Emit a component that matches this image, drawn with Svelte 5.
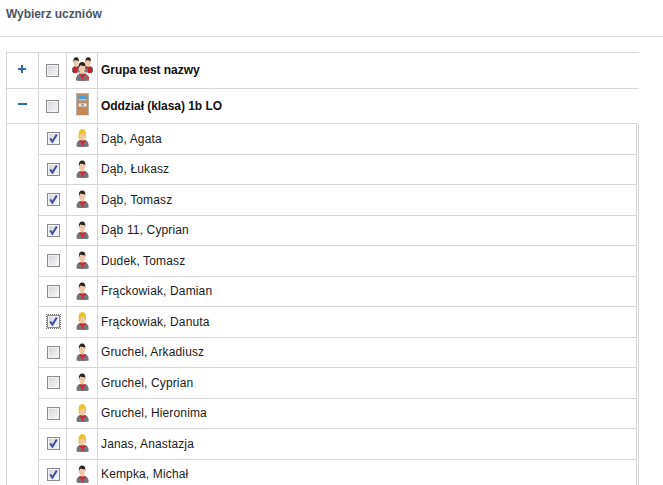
<script>
  const students = [
    { name: 'Dąb, Agata', checked: true, female: true },
    { name: 'Dąb, Łukasz', checked: true },
    { name: 'Dąb, Tomasz', checked: true },
    { name: 'Dąb 11, Cyprian', checked: true },
    { name: 'Dudek, Tomasz' },
    { name: 'Frąckowiak, Damian' },
    { name: 'Frąckowiak, Danuta', checked: true, female: true, focus: true },
    { name: 'Gruchel, Arkadiusz' },
    { name: 'Gruchel, Cyprian' },
    { name: 'Gruchel, Hieronima', female: true },
    { name: 'Janas, Anastazja', checked: true, female: true },
    { name: 'Kempka, Michał', checked: true }
  ];
</script>

{#snippet person(female)}
  <path d="M0.5 17.5 C0.3 13.8 1.4 12 4 11 L9 11 C11.6 12 12.8 13.8 12.6 17.5 C9 18.4 4 18.4 .5 17.5 Z" fill="#74747a" />
  <path d="M4 11 L6.5 12.4 L9 11 L9.8 12.6 L7.3 14.2 L7.3 16.4 L5.7 16.4 L5.7 14.2 L3.2 12.6 Z" fill="#d6222c" />
  <rect x="5.2" y="9.6" width="2.4" height="2" fill="#e3ac8a" />
  <ellipse cx="6" cy="6.2" rx="3" ry="4.2" fill="#f0c8aa" />
  {#if female}
    <path d="M2.8 9.6 C2 3.6 3.2 0 6.4 0 C9.6 0 10.6 3.6 9.9 8.4 C9.7 9.6 9.3 10.2 8.6 10.8 C9.3 7.4 8.8 5 7.6 3.8 C6.4 5 5.2 5.4 4.2 5.6 C4 7.4 4.2 9.2 4.5 10.8 C3.6 10.6 3.1 10.2 2.8 9.6 Z" fill="#efc22a" />
  {:else}
    <path d="M2.9 6.2 C2.5 2.4 3.8 .4 6.2 .4 C8.7 .4 9.7 2.4 9.3 6.2 L8.7 4.2 C7.2 4.2 5.4 3.9 4.4 3.5 C3.8 4.3 3.3 5.2 2.9 6.2 Z" fill="#2a2422" />
  {/if}
{/snippet}

{#snippet checkbox(checked, focus)}
  <span class="box" class:focus>
    {#if checked}
      <svg viewBox="0 0 11 11" width="11" height="11" aria-hidden="true">
        <path d="M2.2 5.4 L4.4 8.6 L8.8 1.4" fill="none" stroke="#3c4fa8" stroke-width="2" />
      </svg>
    {/if}
  </span>
{/snippet}

<main class="page">
  <h1>Wybierz uczniów</h1>
  <section class="tree">
    <div class="row group top">
      <div class="toggle">
        <svg viewBox="0 0 8 8" width="8" height="8" aria-hidden="true"><path d="M0 4 H8 M4 0 V8" stroke="#2f6ea5" stroke-width="2" /></svg>
      </div>
      <div class="check">{@render checkbox(false, false)}</div>
      <div class="icon">
        <svg viewBox="0 0 21 24" width="21" height="24" aria-hidden="true">
          <g transform="translate(-1 0) scale(.85)">{@render person(false)}</g>
          <g transform="translate(11 0) scale(.85)">{@render person(false)}</g>
          <rect x="1" y="11" width="4" height="5" fill="#c2202a" />
          <rect x="16" y="11" width="4" height="5" fill="#c2202a" />
          <g transform="translate(3.5 4.5) scale(1.08)">{@render person(false)}</g>
          <circle cx="15.5" cy="20.5" r="1.5" fill="#ee3a3e" />
        </svg>
      </div>
      <div class="label"><strong>Grupa test nazwy</strong></div>
    </div>
    <div class="row group second">
      <div class="toggle">
        <svg viewBox="0 0 9 8" width="9" height="8" aria-hidden="true"><path d="M0 4 H9" stroke="#2f6ea5" stroke-width="2" /></svg>
      </div>
      <div class="check">{@render checkbox(false, false)}</div>
      <div class="icon">
        <svg viewBox="0 0 15 23" width="15" height="23" aria-hidden="true">
          <path d="M0 23 L1.5 20.5 H13.5 L15 23 Z" fill="#e2e2de" />
          <rect x="1" y="0" width="13" height="22" fill="#b4b4b0" />
          <rect x="2" y="1" width="11" height="21" fill="#c48a58" />
          <rect x="3.5" y="3" width="8" height="4" fill="#4c9fd6" />
          <rect x="3.5" y="6" width="8" height="1.5" fill="#9cc7e0" />
          <rect x="3.5" y="10.5" width="8" height="3" fill="#e9eef0" />
          <rect x="6" y="11.3" width="3" height="1.4" fill="#7d8a96" />
        </svg>
      </div>
      <div class="label"><strong>Oddział (klasa) 1b LO</strong></div>
    </div>
    <div class="nested">
      {#each students as s}
        <div class="row student">
          <div class="check">{@render checkbox(s.checked, s.focus)}</div>
          <div class="icon">
            <svg viewBox="0 0 13 18" width="13" height="18" aria-hidden="true">
              {@render person(s.female)}
            </svg>
          </div>
          <div class="label">{s.name}</div>
        </div>
      {/each}
    </div>
  </section>
</main>

<style>
  :global(body) {
    margin: 0;
    background: #fff;
    overflow: hidden;
  }
  .page {
    width: 663px;
    height: 485px;
    overflow: hidden;
    font-family: "Liberation Sans", Arial, sans-serif;
    font-size: 12px;
    color: #1c1c1c;
  }
  h1 {
    margin: 0;
    height: 36px;
    padding-left: 6px;
    border-bottom: 1px solid #d6d6d6;
    font-size: 12px;
    line-height: 28px;
    font-weight: bold;
    color: #4a5564;
    letter-spacing: -0.05px;
  }
  .tree {
    margin: 15px 24px 0 6px;
    border-left: 1px solid #d6d6d6;
  }
  .row {
    display: flex;
    box-sizing: border-box;
    border-bottom: 1px solid #d6d6d6;
  }
  .group.top {
    height: 37px;
    border-top: 1px solid #d6d6d6;
  }
  .group.second {
    height: 35px;
    margin-right: 1px;
  }
  .toggle {
    width: 32px;
    flex: none;
    display: flex;
    justify-content: center;
    align-items: flex-start;
    padding-top: 12px;
    box-sizing: border-box;
    border-right: 1px solid #d6d6d6;
  }
  .toggle svg {
    display: block;
    margin-left: -1px;
  }
  .second .toggle {
    padding-top: 11px;
  }
  .check {
    width: 28px;
    flex: none;
    box-sizing: border-box;
    border-right: 1px solid #d6d6d6;
    display: flex;
    align-items: center;
    justify-content: center;
  }
  .icon {
    width: 31px;
    flex: none;
    box-sizing: border-box;
    border-right: 1px solid #d6d6d6;
    display: flex;
    align-items: flex-start;
    justify-content: center;
  }
  .icon svg {
    display: block;
  }
  .top .icon {
    padding-top: 4px;
  }
  .second .icon {
    padding-top: 4px;
  }
  .student .icon {
    padding-top: 5px;
  }
  .label {
    flex: 1;
    display: flex;
    align-items: center;
    padding-left: 3px;
    color: #1a1a1a;
    letter-spacing: 0.14px;
  }
  .top .label {
    padding-bottom: 2px;
  }
  .label strong {
    color: #111;
    letter-spacing: -0.05px;
  }
  .nested {
    margin-left: 31px;
    box-sizing: border-box;
    border-left: 1px solid #d6d6d6;
    border-right: 1px solid #d6d6d6;
    width: 599px;
    box-shadow: 1px 0 0 #fff, 2px 0 0 #d6d6d6;
  }
  .student {
    height: 30.5px;
  }
  .student .box {
    margin-left: 2px;
  }
  .box {
    width: 13px;
    height: 13px;
    box-sizing: border-box;
    border: 1px solid #8c8c8c;
    background: linear-gradient(135deg, #d4d4d8, #f8f8fa);
    box-shadow: inset 0 0 0 1px #f2f2f2;
    display: block;
    position: relative;
  }
  .box svg {
    display: block;
    position: absolute;
    left: 0;
    top: 0;
  }
  .box.focus {
    outline: 1px dotted #777;
    outline-offset: 0;
  }
</style>
